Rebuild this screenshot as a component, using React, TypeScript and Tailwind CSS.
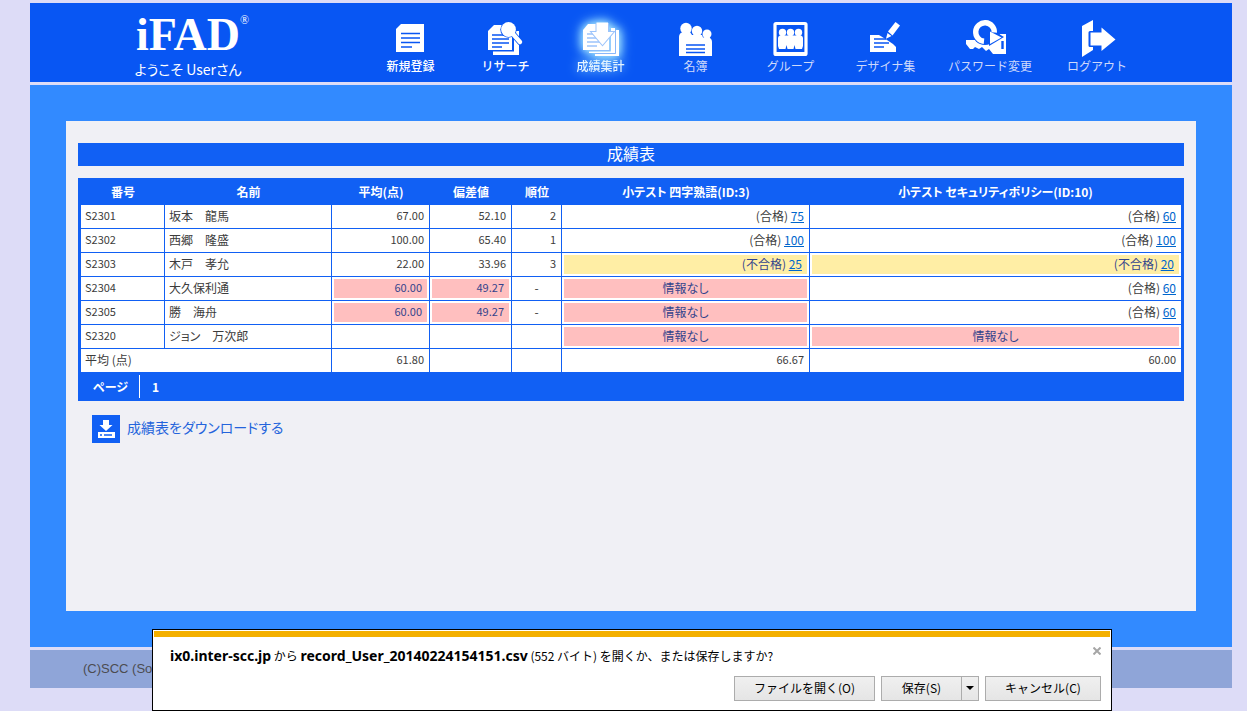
import React from 'react';
import clsx from 'clsx';

interface NavItem {
  label: string;
  icon: React.ReactNode;
  width: string;
  active?: boolean;
  bright?: boolean;
}

interface ScoreCell {
  kind: 'pass' | 'fail' | 'none';
  score?: number;
}

interface StudentRow {
  id: string;
  name: string;
  average?: string;
  deviation?: string;
  rank?: string;
  provisional?: boolean;
  scores: ScoreCell[];
}

const BLUE = '#0856f3';

const NewIcon = (
  <>
    <path d="M14 7H37V35H9V12Z" fill="currentColor" />
    <path d="M14 16.5H33M14 21H33M14 25.5H33M14 30H25" stroke={BLUE} strokeWidth="1.6" />
  </>
);

const ResearchIcon = (
  <>
    <path d="M11 34.5H32V14H37V38H11Z" fill="currentColor" />
    <path d="M12 8H30V33H6V14Z" fill="currentColor" />
    <path d="M10 18H24M10 22H27M10 26H27M10 30H20" stroke={BLUE} strokeWidth="1.6" />
    <path d="M31 34V25" stroke={BLUE} strokeWidth="1.2" />
    <circle cx="26.5" cy="12.5" r="8.2" fill={BLUE} />
    <path d="M31 17L38 25" stroke={BLUE} strokeWidth="6" strokeLinecap="round" />
    <circle cx="26.5" cy="12.5" r="7.4" fill="currentColor" />
    <path d="M31 17L38 25" stroke="currentColor" strokeWidth="4.4" strokeLinecap="round" />
  </>
);

const ResultIcon = (
  <>
    <path d="M18 36.5H39V13H42V39H18Z" fill="currentColor" />
    <path d="M12 34.5H34V11H38V36H12Z" fill="currentColor" />
    <path d="M11 7H32V33H6V13Z" fill="currentColor" />
    <path d="M33 12V33.7H12" fill="none" stroke="#8ab8fa" strokeWidth="1" />
    <path d="M38.5 13V36.5H18" fill="none" stroke="#8ab8fa" strokeWidth="1" />
    <path d="M10 17H17M10 21H20M10 25H23M10 29H20" stroke="#9cc4fb" strokeWidth="1.6" />
    <path d="M19.5 6V15H14.5L25.5 28L36.5 15H31V6" fill="none" stroke="#9cc4fb" strokeWidth="2" />
    <path d="M19.5 5.5H31V15H36.5L25.5 28L14.5 15H19.5Z" fill="currentColor" />
  </>
);

const RosterIcon = (
  <>
    <circle cx="14" cy="11.5" r="5.7" fill="currentColor" />
    <circle cx="25" cy="14" r="5.2" fill="currentColor" />
    <circle cx="35" cy="17" r="4.5" fill="currentColor" />
    <path d="M7 39V20Q7 16 11 15H18L20 18H30L31 20.5H37Q40 21.5 40 25V39Z" fill="currentColor" />
    <path d="M14 28H33M14 32H33M14 35.5H33" stroke={BLUE} strokeWidth="1.6" />
  </>
);

const GroupIcon = (
  <>
    <rect x="8" y="6.5" width="31" height="31" rx="1" fill="none" stroke="currentColor" strokeWidth="3.2" />
    <path d="M8 35H39V38H8Z" fill="currentColor" />
    <circle cx="15.5" cy="15.5" r="3.7" fill="currentColor" />
    <circle cx="23.5" cy="15.5" r="3.7" fill="currentColor" />
    <circle cx="31.5" cy="15.5" r="3.7" fill="currentColor" />
    <path d="M13 18.5H34Q36 19 36 21V29L35 32H28.5L27.5 28L26.5 32H20.5L19.5 28L18.5 32H12L11 29V21Q11 19 13 18.5Z" fill="currentColor" />
  </>
);

const DesignIcon = (
  <>
    <path d="M8 18H17L25 23L31 27L34 30V35H8Z" fill="currentColor" />
    <path d="M12 22H24M12 26H27M12 30H22" stroke={BLUE} strokeWidth="1.4" />
    <path d="M26 14.5L33.5 5L38 8.5L30.5 18.5Z" fill="currentColor" />
    <path d="M25.5 16L29.5 19L24 21.8Z" fill="currentColor" />
  </>
);

const PasswordIcon = (
  <>
    <path d="M0 23H30L34 17H40V37H27L23 32L20 34L16 30L13 32L9 30L7 32H4L0 27Z" fill="currentColor" />
    <path d="M36.5 24V32" stroke={BLUE} strokeWidth="2.4" />
    <circle cx="19" cy="15" r="13" fill={BLUE} />
    <path d="M23 11L38 20L23 29Z" fill={BLUE} />
    <path d="M18 24.3A9.3 9.3 0 1 1 28.3 15.5" fill="none" stroke="currentColor" strokeWidth="5.4" />
    <path d="M24 14.5L35.5 20.5L24 27Z" fill="currentColor" />
  </>
);

const LogoutIcon = (
  <>
    <path d="M9 9L20 3V33L9 40Z" fill="currentColor" />
    <path d="M17 15.5H28.5V10.5L42.5 22.5L28.5 34V28.5H17Z" fill="currentColor" stroke={BLUE} strokeWidth="3" strokeLinejoin="round" />
    <path d="M17.5 15.5H28.5V10.5L42.5 22.5L28.5 34V28.5H17.5Z" fill="currentColor" />
  </>
);

const navItems: NavItem[] = [
  { label: '新規登録', icon: NewIcon, width: 'w-[95px]', bright: true },
  { label: 'リサーチ', icon: ResearchIcon, width: 'w-[95px]', bright: true },
  { label: '成績集計', icon: ResultIcon, width: 'w-[95px]', active: true },
  { label: '名簿', icon: RosterIcon, width: 'w-[95px]' },
  { label: 'グループ', icon: GroupIcon, width: 'w-[95px]' },
  { label: 'デザイナ集', icon: DesignIcon, width: 'w-[95px]' },
  { label: 'パスワード変更', icon: PasswordIcon, width: 'w-[114px]' },
  { label: 'ログアウト', icon: LogoutIcon, width: 'w-[100px]' },
];

const students: StudentRow[] = [
  {
    id: 'S2301', name: '坂本　龍馬', average: '67.00', deviation: '52.10', rank: '2',
    scores: [{ kind: 'pass', score: 75 }, { kind: 'pass', score: 60 }],
  },
  {
    id: 'S2302', name: '西郷　隆盛', average: '100.00', deviation: '65.40', rank: '1',
    scores: [{ kind: 'pass', score: 100 }, { kind: 'pass', score: 100 }],
  },
  {
    id: 'S2303', name: '木戸　孝允', average: '22.00', deviation: '33.96', rank: '3',
    scores: [{ kind: 'fail', score: 25 }, { kind: 'fail', score: 20 }],
  },
  {
    id: 'S2304', name: '大久保利通', average: '60.00', deviation: '49.27', provisional: true,
    scores: [{ kind: 'none' }, { kind: 'pass', score: 60 }],
  },
  {
    id: 'S2305', name: '勝　海舟', average: '60.00', deviation: '49.27', provisional: true,
    scores: [{ kind: 'none' }, { kind: 'pass', score: 60 }],
  },
  {
    id: 'S2320', name: 'ジョン　万次郎',
    scores: [{ kind: 'none' }, { kind: 'none' }],
  },
];

const cell = 'h-6 border-r border-b border-[#1160f4] bg-white p-[2px] align-top last:border-r-0';

function Score({ kind, score }: ScoreCell) {
  if (kind === 'none') {
    return <div className="h-[19px] bg-[#ffbfbf] text-center text-[#34448c]">情報なし</div>;
  }
  return (
    <div
      className={clsx(
        'h-[19px] text-right',
        kind === 'fail' ? 'bg-[#ffeea5] pr-[5px] text-[#34448c]' : 'pr-[3px]'
      )}
    >
      {kind === 'fail' ? '(不合格) ' : '(合格) '}
      <a href="#score" className="text-[#0066cc] underline">{score}</a>
    </div>
  );
}

function NumberCell({ value, marked }: { value?: string; marked?: boolean }) {
  return (
    <td className={cell}>
      <div
        className={clsx(
          'h-[19px] text-right text-[11px]',
          marked ? 'bg-[#ffbfbf] pr-[5px] text-[#34448c]' : 'pr-[3px]'
        )}
      >
        {value}
      </div>
    </td>
  );
}

function Header() {
  return (
    <header className="flex h-[79px] bg-[#0856f3]">
      <div className="w-[333px] shrink-0 pt-[11px] pr-[17px] text-center text-white">
        <div className="relative mx-auto w-fit font-['Liberation_Serif',serif] text-[46px] leading-[42px] font-bold">
          iFAD
          <span className="absolute top-0 left-full text-[12px] leading-3 font-normal">®</span>
        </div>
        <p className="text-[14px] leading-[26px]">ようこそ Userさん</p>
      </div>
      <nav className="flex [font-feature-settings:normal]">
        {navItems.map((item) => (
          <a
            key={item.label}
            href="#menu"
            className={clsx(
              'flex flex-col items-center pt-[14px]',
              item.width,
              item.active && 'drop-shadow-[0_0_6px_#8fdcff]'
            )}
          >
            <svg
              width="48"
              height="40"
              viewBox="0 0 48 40"
              className={clsx('text-white', item.active && 'drop-shadow-[0_0_4px_#a5e4ff]')}
            >
              {item.icon}
            </svg>
            <span
              className={clsx(
                'text-[12px] leading-[18px] whitespace-nowrap',
                item.bright && 'font-medium text-white',
                item.active && 'font-medium text-[#e4f4ff]',
                !item.bright && !item.active && 'text-[#ced9fb]'
              )}
            >
              {item.label}
            </span>
          </a>
        ))}
      </nav>
    </header>
  );
}

function ScoreTable() {
  return (
    <div className="mt-3 border-x-[3px] border-[#1160f4] bg-[#1160f4] text-[12px] leading-[17px] text-[#3c3c3c]">
      <table className="w-full table-fixed border-separate border-spacing-0">
        <colgroup>
          <col className="w-[84px]" />
          <col className="w-[167px]" />
          <col className="w-[98px]" />
          <col className="w-[82px]" />
          <col className="w-[50px]" />
          <col className="w-[248px]" />
          <col />
        </colgroup>
        <thead>
          <tr className="h-[27px] font-bold text-white">
            <th>番号</th>
            <th>名前</th>
            <th>平均(点)</th>
            <th>偏差値</th>
            <th>順位</th>
            <th>小テスト 四字熟語(ID:3)</th>
            <th>小テスト セキュリティポリシー(ID:10)</th>
          </tr>
        </thead>
        <tbody>
          {students.map((student) => (
            <tr key={student.id}>
              <td className={cell}><div className="pl-[2px] text-[11px]">{student.id}</div></td>
              <td className={cell}><div className="pl-[2px]">{student.name}</div></td>
              <NumberCell value={student.average} marked={student.provisional} />
              <NumberCell value={student.deviation} marked={student.provisional} />
              {student.provisional ? (
                <td className={clsx(cell, 'text-center')}>-</td>
              ) : (
                <NumberCell value={student.rank} />
              )}
              {student.scores.map((score, i) => (
                <td key={i} className={cell}><Score {...score} /></td>
              ))}
            </tr>
          ))}
          <tr>
            <td colSpan={2} className={cell}><div className="pl-[2px]">平均 (点)</div></td>
            <NumberCell value="61.80" />
            <NumberCell />
            <NumberCell />
            <NumberCell value="66.67" />
            <NumberCell value="60.00" />
          </tr>
        </tbody>
      </table>
      {/* Pager */}
      <div className="flex pt-[2px] pb-[3px] leading-[23px] font-bold text-white">
        <span className="w-[59px] border-r border-white pl-3">ページ</span>
        <span className="pl-3">1</span>
      </div>
    </div>
  );
}

function DownloadBar() {
  const button = 'h-[25px] border border-[#acacac] bg-linear-to-b from-[#f0f0f0] to-[#e5e5e5] pb-[2px] text-[12px] leading-[20px]';

  return (
    <div
      role="dialog"
      aria-label="ダウンロード"
      className="fixed right-[135px] bottom-0 left-[152px] border border-black bg-white p-px text-black [font-feature-settings:normal]"
    >
      <div className="h-[6px] bg-[#f4b000]" />
      <div className="flex items-start justify-between pt-[9px] pr-[5px] pl-4">
        <p className="text-[12px] leading-5 whitespace-nowrap">
          <b className="font-['Noto_Sans',sans-serif] text-[14px]">ix0.inter-scc.jp</b> から{' '}
          <b className="font-['Noto_Sans',sans-serif] text-[14px]">record_User_20140224154151.csv</b>
          {' '}(552 バイト) を開くか、または保存しますか?
        </p>
        <button aria-label="閉じる" className="flex h-[10px] w-4 items-center justify-center">
          <svg width="8" height="8" viewBox="0 0 8 8">
            <path d="M0.5 0.5L7.5 7.5M7.5 0.5L0.5 7.5" stroke="#a6a6a6" strokeWidth="2" />
          </svg>
        </button>
      </div>
      <div className="flex justify-end gap-[6px] pt-[10px] pr-[9px] pb-2">
        <button className={clsx(button, 'w-[141px]')}>ファイルを開く(O)</button>
        <div className="flex">
          <button className={clsx(button, 'w-20 border-r-0')}>保存(S)</button>
          <button aria-label="保存オプション" className={clsx(button, 'flex w-[18px] items-center justify-center')}>
            <svg width="8" height="4" viewBox="0 0 8 4">
              <path d="M0 0H8L4 4Z" fill="black" />
            </svg>
          </button>
        </div>
        <button className={clsx(button, 'w-[116px]')}>キャンセル(C)</button>
      </div>
    </div>
  );
}

export default function App() {
  return (
    <div className="min-h-screen bg-[#dddcf7] pt-[3px] pr-[15px] pl-[30px] font-['Noto_Sans_CJK_JP',sans-serif] [font-feature-settings:'palt']">
      <Header />
      <main className="mt-[3px] bg-[#328aff] p-9">
        <div className="min-h-[490px] bg-[#f0f0f5] px-3 pt-[22px]">
          <h1 className="bg-[#1160f4] pb-[2px] text-center text-[16px] leading-[21px] text-white">成績表</h1>
          <ScoreTable />
          <a href="#download" className="mt-[14px] ml-[14px] flex w-fit items-center gap-[7px] text-[14px] text-[#2464dc]">
            <svg width="28" height="28" viewBox="0 0 28 28">
              <path d="M0 0H28V28H0Z" fill="#1160f4" />
              <path d="M11 5H17V10H20.5L14 16L7.5 10H11Z" fill="white" />
              <path d="M6 17H23V23H6Z" fill="white" />
              <path d="M8 20H10M12 20H20" stroke="#1160f4" strokeWidth="1.4" />
            </svg>
            <span className="pb-[3px]">成績表をダウンロードする</span>
          </a>
        </div>
      </main>
      <footer className="mt-[3px] bg-[#8fa5d8] pl-[53px] font-['Liberation_Sans',sans-serif] text-[13px] leading-[38px] text-[#4c4c50]">
        (C)SCC (Sof
      </footer>
      <DownloadBar />
    </div>
  );
}
